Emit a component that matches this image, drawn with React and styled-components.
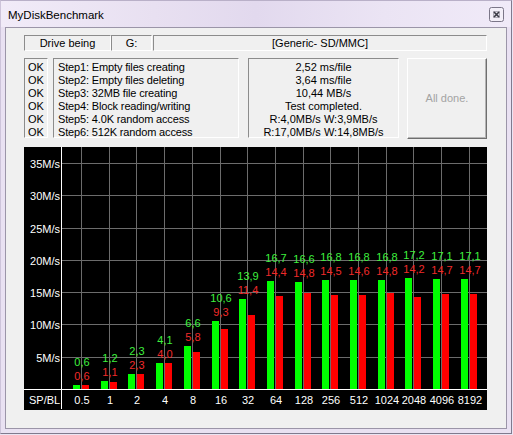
import React from 'react'
import styled, { createGlobalStyle } from 'styled-components'

const GlobalStyle = createGlobalStyle`
  html, body {
    margin: 0;
    padding: 0;
    background: #ebe4f3;
  }
  body {
    font-family: "Liberation Sans", Arial, sans-serif;
  }
`;

const Window = styled.div`
  box-sizing: border-box;
  width: 512px;
  height: 434px;
  display: flex;
  flex-direction: column;
  background: #e9e1f2;
  border: 1px solid #807a8e;
  border-left-color: #cdc4da;
  border-top-color: #b9b0c8;
`;

const TitleBar = styled.div`
  height: 26px;
  flex: none;
  display: flex;
  align-items: center;
  justify-content: space-between;
  padding: 0 7px 0 7px;
  background: linear-gradient(90deg, #f1ebf8 0%, #e8e0f1 30%, #e2d9ee 50%, #ebe4f4 75%, #f0eaf8 100%);
`;

const Title = styled.span`
  font-size: 11.5px;
  color: #000;
  padding-top: 1px;
`;

const Client = styled.div`
  flex: 1;
  margin: 0 4px 4px 4px;
  border: 1px solid #9b95a8;
  background: #f0f0f0;
  display: flex;
  flex-direction: column;
  padding: 7px 19px 18px 18px;
`;

const DriveRow = styled.div`
  display: flex;
  height: 16px;
  gap: 0;
`;

const Sunken = styled.div`
  box-sizing: border-box;
  border: 1px solid;
  border-color: #8c8c8c #ffffff #ffffff #8c8c8c;
  font-size: 11px;
  color: #000;
`;

const Field = styled(Sunken)`
  width: ${p => p.$w ? p.$w + 'px' : 'auto'};
  flex: ${p => p.$w ? 'none' : 1};
  margin-left: ${p => p.$ml || 0}px;
  height: 16px;
  line-height: 14px;
  text-align: center;
`;

const StatusRow = styled.div`
  display: flex;
  margin-top: 7px;
  height: 81px;
`;

const ListBox = styled(Sunken)`
  width: ${p => p.$w}px;
  margin-right: ${p => p.$mr}px;
  padding: 2px 0 0 ${p => p.$pl || 0}px;
  line-height: 13px;
  text-align: ${p => p.$center ? 'center' : 'left'};
  white-space: nowrap;
  height: 80px;
  letter-spacing: ${p => p.$tight ? '-0.15px' : '0'};
`;

const DoneButton = styled.div`
  box-sizing: border-box;
  flex: 1;
  height: 81px;
  border: 1px solid;
  border-color: #ffffff #6e6e6e #6e6e6e #ffffff;
  box-shadow: inset -1px -1px 0 #b4b4b4;
  display: flex;
  align-items: center;
  justify-content: center;
  font-size: 11px;
  color: #a3a3a3;
  padding-bottom: 2px;
`;

const ChartBox = styled.div`
  margin-top: 8px;
  flex: 1;
  background: #000;
  overflow: hidden;
`;

const AxisLabel = styled.text`
  fill: #ffffff;
  font-family: "Liberation Sans", Arial, sans-serif;
  font-size: 11px;
`;

const ValueLabel = styled.text`
  fill: ${p => p.$c};
  font-family: "Liberation Sans", Arial, sans-serif;
  font-size: 11px;
`;

const steps = [
  'Step1: Empty files creating',
  'Step2: Empty files deleting',
  'Step3: 32MB file creating',
  'Step4: Block reading/writing',
  'Step5: 4.0K random access',
  'Step6: 512K random access',
];

const results = [
  '2,52 ms/file',
  '3,64 ms/file',
  '10,44 MB/s',
  'Test completed.',
  'R:4,0MB/s W:3,9MB/s',
  'R:17,0MB/s W:14,8MB/s',
];

const data = [
  ['0.5', 0.6, 0.6],
  ['1', 1.2, 1.1],
  ['2', 2.3, 2.3],
  ['4', 4.1, 4.0],
  ['8', 6.6, 5.8],
  ['16', 10.6, 9.3],
  ['32', 13.9, 11.4],
  ['64', 16.7, 14.4],
  ['128', 16.6, 14.8],
  ['256', 16.8, 14.5],
  ['512', 16.8, 14.6],
  ['1024', 16.8, 14.8],
  ['2048', 17.2, 14.2],
  ['4096', 17.1, 14.7],
  ['8192', 17.1, 14.7],
];

const fmt = v => v.toFixed(1).replace('.', ',');

function CloseIcon() {
  return (
    <svg width="15" height="15" viewBox="0 0 15 15" style={{ marginTop: 1 }}>
      <rect x="0.5" y="0.5" width="14" height="14" rx="2" fill="#f3eff8" stroke="#7b7688" />
      <rect x="4.5" y="4.5" width="6" height="6" fill="#e4e0ea" stroke="#b0acb8" />
      <path d="M5 5 L10 10 M10 5 L5 10" stroke="#3a3a44" strokeWidth="1.6" />
    </svg>
  )
}

function Chart() {
  const W = 463;
  const H = 262;
  const axisY = 242;
  const axisX = 37;
  const px = 32.3 / 5;
  const cols = data.map((_, i) => Math.round(57 + 27.7 * i));
  const ticks = [1, 2, 3, 4, 5, 6, 7].map(k => ({ y: Math.round(axisY - k * 32.3), label: `${k * 5}M/s` }));

  return (
    <svg width={W} height={H} viewBox={`0 0 ${W} ${H}`} style={{ display: 'block' }}>
      {ticks.map(t => (
        <line key={t.y} x1={axisX} x2={W} y1={t.y + 0.5} y2={t.y + 0.5} stroke="#6c6c6c" />
      ))}
      {cols.map(c => (
        <line key={c} x1={c + 0.5} x2={c + 0.5} y1={0} y2={axisY} stroke="#6c6c6c" />
      ))}
      {ticks.map(t => (
        <AxisLabel key={'l' + t.y} x={36} y={t.y + 5} textAnchor="end">{t.label}</AxisLabel>
      ))}
      {data.map(([name, g, r], i) => {
        const c = cols[i];
        const hg = Math.round(g * px);
        const hr = Math.round(r * px);
        const top = axisY - Math.max(hg, hr);
        const redBase = top - 5.5;
        return (
          <g key={name}>
            <rect x={c - 8} y={axisY - hg} width={7} height={hg} fill="#00ff00" />
            <rect x={c + 1} y={axisY - hr} width={7} height={hr} fill="#ff0000" />
            <ValueLabel x={c + 1} y={redBase - 13.5} textAnchor="middle" $c="#3ef03e">{fmt(g)}</ValueLabel>
            <ValueLabel x={c + 1} y={redBase} textAnchor="middle" $c="#f02a2a">{fmt(r)}</ValueLabel>
            <AxisLabel x={c + 1} y={257} textAnchor="middle">{name}</AxisLabel>
          </g>
        )
      })}
      <line x1={axisX + 0.5} x2={axisX + 0.5} y1={0} y2={H} stroke="#ffffff" />
      <line x1={0} x2={W} y1={axisY + 0.5} y2={axisY + 0.5} stroke="#ffffff" />
      <AxisLabel x={5} y={257}>SP/BL</AxisLabel>
    </svg>
  )
}

export default function App() {
  return (
    <>
      <GlobalStyle />
      <Window>
        <TitleBar>
          <Title>MyDiskBenchmark</Title>
          <CloseIcon />
        </TitleBar>
        <Client>
          <DriveRow>
            <Field $w={87}>Drive being</Field>
            <Field $w={41}>G:</Field>
            <Field $ml={1}>[Generic- SD/MMC]</Field>
          </DriveRow>
          <StatusRow>
            <ListBox $w={24} $mr={5} $pl={3}>
              {steps.map((_, i) => <div key={i}>OK</div>)}
            </ListBox>
            <ListBox $w={186} $mr={9} $pl={4} $tight>
              {steps.map(s => <div key={s}>{s}</div>)}
            </ListBox>
            <ListBox $w={151} $mr={8} $center>
              {results.map(s => <div key={s}>{s}</div>)}
            </ListBox>
            <DoneButton>All done.</DoneButton>
          </StatusRow>
          <ChartBox>
            <Chart />
          </ChartBox>
        </Client>
      </Window>
    </>
  )
}
